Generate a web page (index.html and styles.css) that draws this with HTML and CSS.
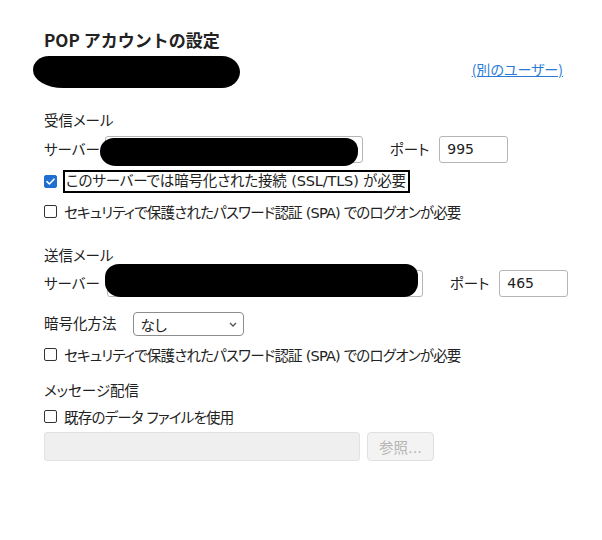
FILE: index.html
```html
<!DOCTYPE html>
<html lang="ja">
<head>
<meta charset="utf-8">
<link rel="stylesheet" href="styles.css">
</head>
<body>
<div class="page">
  <h1 class="title">POP アカウントの設定</h1>
  <div class="account-row">
    <div class="blob blob-account"></div>
    <a class="link" href="#">(別のユーザー)</a>
  </div>

  <div class="section-label in-label">受信メール</div>
  <div class="server-row">
    <span class="lbl">サーバー</span>
    <div class="field-wrap in-server">
      <div class="input"></div>
      <div class="blob blob-in"></div>
    </div>
    <span class="lbl port-lbl">ポート</span>
    <div class="input port">995</div>
  </div>
  <div class="check-row first">
    <span class="cb checked"><svg width="13" height="13" viewBox="0 0 13 13"><path d="M3 6.6 L5.4 9 L10 4.2" fill="none" stroke="#fff" stroke-width="1.6" stroke-linecap="round" stroke-linejoin="round"/></svg></span>
    <span class="focus">このサーバーでは暗号化された接続 (SSL/TLS) が必要</span>
  </div>
  <div class="check-row">
    <span class="cb"></span>
    <span class="ctext">セキュリティで保護されたパスワード認証 (SPA) でのログオンが必要</span>
  </div>

  <div class="section-label out-label">送信メール</div>
  <div class="server-row out">
    <span class="lbl">サーバー</span>
    <div class="field-wrap out-server">
      <div class="input"></div>
      <div class="blob blob-out"></div>
    </div>
    <span class="lbl port-lbl">ポート</span>
    <div class="input port">465</div>
  </div>
  <div class="enc-row">
    <span class="lbl">暗号化方法</span>
    <div class="select">なし<svg class="chev" width="8" height="5" viewBox="0 0 8 5"><path d="M1 1 L4 4 L7 1" fill="none" stroke="#555" stroke-width="1.3"/></svg></div>
  </div>
  <div class="check-row">
    <span class="cb"></span>
    <span class="ctext">セキュリティで保護されたパスワード認証 (SPA) でのログオンが必要</span>
  </div>

  <div class="section-label msg-label">メッセージ配信</div>
  <div class="check-row last">
    <span class="cb"></span>
    <span class="ctext">既存のデータ ファイルを使用</span>
  </div>
  <div class="file-row">
    <div class="input disabled"></div>
    <div class="btn disabled-btn">参照...</div>
  </div>
</div>
</body>
</html>
```

FILE: styles.css
```css
* { box-sizing: border-box; }
html, body { margin: 0; padding: 0; background: #fff; }
body {
  font-family: "DejaVu Sans", "Noto Sans CJK JP", sans-serif;
  font-size: 14.5px;
  font-feature-settings: "palt";
  color: #222;
  width: 602px;
  height: 540px;
  overflow: hidden;
}
.page { padding: 28px 0 0 44px; width: 602px; }
.title {
  margin: 0;
  font-family: "Noto Sans CJK JP", sans-serif;
  font-size: 17px;
  font-weight: 700;
  line-height: 24px;
  color: #222;
  font-feature-settings: normal;
}
.account-row {
  display: flex;
  justify-content: space-between;
  align-items: center;
  margin-left: -11px;
  width: 530px;
  margin-top: 3px;
  height: 33px;
}
.blob { background: #000; }
.blob-account {
  width: 207px;
  height: 32px;
  border-radius: 16px 18px 18px 30px / 14px 16px 16px 18px;
}
.link {
  font-family: "Noto Sans CJK JP", sans-serif;
  color: #2b7bd6;
  text-decoration: underline;
  font-size: 14px;
  margin-top: -6px;
}
.section-label { line-height: 20px; }
.in-label { margin-top: 23px; }
.server-row {
  display: flex;
  align-items: center;
  margin-top: 5px;
  height: 27px;
}
.lbl { line-height: 20px; white-space: nowrap; }
.field-wrap { position: relative; height: 27px; }
.in-server { width: 258px; margin-left: 5px; }
.out-server { width: 316px; margin-left: 7px; }
.input {
  height: 27px;
  border: 1px solid #b5b5b5;
  border-radius: 3px;
  background: #fff;
  padding: 0 7px;
  line-height: 25px;
  font-family: "DejaVu Sans", sans-serif;
  font-size: 14px;
}
.field-wrap .input { width: 100%; }
.field-wrap .blob { position: absolute; border-radius: 14px 12px 14px 16px / 13px 12px 14px 14px; }
.blob-in { left: -5px; top: 2px; width: 258px; height: 28px; }
.blob-out { left: -2px; top: -6px; width: 313px; height: 33px; }
.port-lbl { margin-left: 27px; }
.port { width: 69px; margin-left: 10px; }
.check-row {
  display: flex;
  align-items: center;
  height: 22px;
  margin-top: 7px;
}
.check-row.first { margin-top: 7px; height: 23px; }
.check-row.last { margin-top: 4px; }
.cb {
  width: 13px;
  height: 13px;
  border: 1px solid #333;
  border-radius: 2px;
  flex: none;
  display: flex;
}
.cb.checked { background: #1f6fd1; border-color: #1f6fd1; }
.cb.checked svg { margin: -1px; }
.ctext { margin-left: 7px; white-space: nowrap; letter-spacing: -0.8px; }
.focus {
  margin-left: 6px;
  border: 2px solid #000;
  padding: 0 2px 0 1px;
  line-height: 19px;
  white-space: nowrap;
  letter-spacing: -0.15px;
}
.out-label { margin-top: 24px; }
.server-row.out { margin-top: 4px; }
.enc-row {
  display: flex;
  align-items: center;
  margin-top: 15px;
  height: 24px;
}
.select {
  margin-left: 16px;
  width: 111px;
  height: 24px;
  border: 1px solid #8d8d8d;
  border-radius: 4px;
  display: flex;
  align-items: center;
  justify-content: space-between;
  padding: 0 6px 0 7px;
}
.msg-label { margin-top: 16px; }
.file-row {
  display: flex;
  gap: 7px;
  margin-top: 5px;
}
.input.disabled {
  width: 316px;
  height: 29px;
  background: #efefef;
  border-color: #e2e2e2;
}
.btn.disabled-btn {
  width: 67px;
  height: 29px;
  border: 1px solid #e0e0e0;
  border-radius: 4px;
  background: #f3f3f3;
  color: #b6b6b6;
  display: flex;
  align-items: center;
  justify-content: center;
}
```
